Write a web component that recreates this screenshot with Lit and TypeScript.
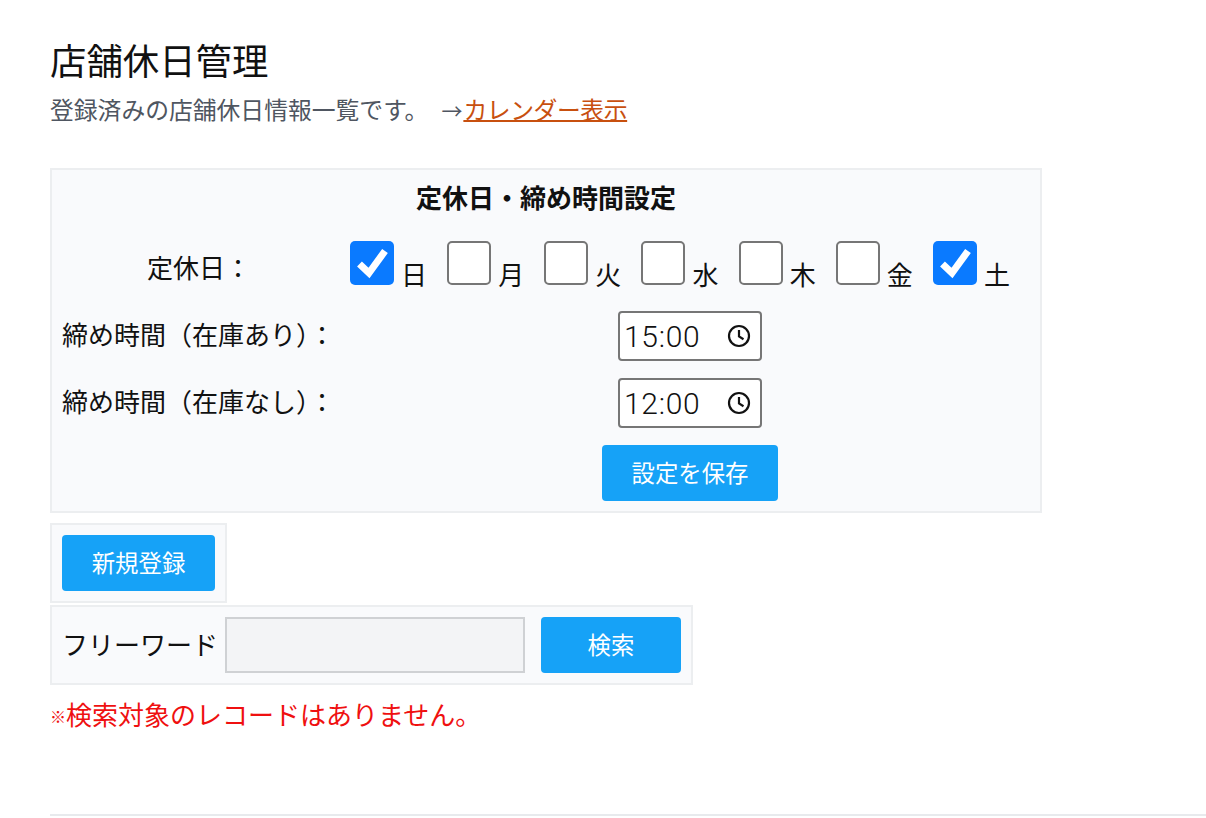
import { LitElement, html, css, svg } from "lit";
import { customElement } from "lit/decorators.js";

const DAYS: [string, boolean][] = [
  ["日", true], ["月", false], ["火", false], ["水", false], ["木", false], ["金", false], ["土", true],
];

const clock = html`<svg class="clock" viewBox="0 0 24 24" width="24" height="24" fill="none" stroke="#111" stroke-width="2.2">
  <circle cx="12" cy="12" r="10"></circle>
  ${svg`<path d="M12 6v6.500l4.500 2.700"></path>`}
</svg>`;

@customElement("app-root")
export class AppRoot extends LitElement {
  static styles = css`
    :host {
      display: block;
      box-sizing: border-box;
      height: 818px;
      overflow: hidden;
      padding: 43px 0 0 50px;
      background: #fff;
      color: #111;
      font-family: "Liberation Sans", "Noto Sans CJK JP", sans-serif;
      font-size: 26px;
    }
    h1 { margin: 0; font-size: 36.4px; font-weight: 400; line-height: 40px; height: 40px; color: #111; }
    .lead { margin: 7px 0 0; line-height: 42px; height: 40px; color: #4f5661; font-size: 23.8px; white-space: nowrap; }
    .lead a { color: #c8500f; text-decoration: underline; text-decoration-thickness: 2px; letter-spacing: -0.4px; }
    .arrow { display: inline-block; width: 22px; margin-left: 13px; font-size: 21px; line-height: 1; font-family: "Noto Sans CJK JP", sans-serif; }
    .panel { box-sizing: border-box; border: 2px solid #eceef0; background: #f9fafc; }
    .settings {
      width: 992px; height: 345px; margin-top: 38px;
      display: grid; grid-template-columns: 288px 1fr; align-content: start;
      padding: 0 10px;
    }
    .settings h2 {
      grid-column: 1 / 3; margin: 0; height: 57px; line-height: 59px;
      text-align: center; font-size: 26px; font-weight: 700; color: #111;
    }
    .row-label { height: 67px; line-height: 50px; white-space: nowrap; }
    .row-label.center { text-align: center; height: 84px; line-height: 84px; padding-right: 14px; }
    .days { display: flex; justify-content: space-between; height: 84px; padding: 14px 20px 0 0; box-sizing: border-box; }
    .day { display: flex; align-items: flex-end; gap: 7px; height: 44px; }
    .day span.t { position: relative; top: 5px; line-height: 28px; }
    .cb { width: 44px; height: 44px; box-sizing: border-box; border: 2px solid #767676; border-radius: 5px; background: #fff; display: block; }
    .cb.on { border: 0; background: #0a7aff; }
    .cb svg { display: block; }
    .time-cell { height: 67px; display: flex; justify-content: center; }
    .time {
      box-sizing: border-box; width: 144px; height: 50px; border: 2px solid #767676; border-radius: 4px;
      background: #fff; display: flex; align-items: center; justify-content: space-between; padding: 0 9px 0 4px;
      font-family: Roboto, sans-serif; font-weight: 300; font-size: 30px; letter-spacing: 0.7px; color: #111;
    }
    .clock { display: block; }
    .save-cell { grid-column: 2; display: flex; justify-content: center; }
    .btn {
      border: 0; border-radius: 4px; background: #16a2f7; color: #fff; height: 56px; box-sizing: border-box;
      font: inherit; font-size: 23.4px; display: flex; align-items: center; justify-content: center; padding: 0 0 3px;
    }
    .save { width: 176px; }
    .new { width: 177px; height: 80px; margin-top: 10px; padding: 10px; }
    .new .btn { width: 153px; }
    .search { width: 643px; height: 80px; margin-top: 2px; padding: 10px; display: flex; align-items: center; }
    .search label { width: 163px; flex: none; padding: 0 0 4px 0; white-space: nowrap; box-sizing: border-box; }
    .search input {
      box-sizing: border-box; width: 300px; height: 56px; border: 2px solid #cfd1d4; background: #f3f4f6;
      border-radius: 0; margin: 0 16px 0 0; padding: 0 8px; font: inherit; outline: none;
    }
    .search .btn { width: 140px; }
    .err { margin: 11px 0 0; color: #ef1010; line-height: 40px; height: 40px; white-space: nowrap; }
    .mark { display: inline-block; width: 16px; font-size: 16px; line-height: 1; font-weight: 900; vertical-align: 2px; }
    hr { border: 0; height: 2px; background: #e8eaed; margin: 78px 0 0; }
  `;

  render() {
    return html`
      <h1>店舗休日管理</h1>
      <p class="lead">登録済みの店舗休日情報一覧です。<span class="arrow">→</span><a href="#">カレンダー表示</a></p>
      <section class="panel settings">
        <h2>定休日・締め時間設定</h2>
        <div class="row-label center">定休日：</div>
        <div class="days">
          ${DAYS.map(([d, on]) => html`
            <div class="day">
              <span class="cb ${on ? "on" : ""}">
                ${on ? html`<svg viewBox="0 0 44 44" width="44" height="44"><path d="M9.500 23l9.500 9L35 10" fill="none" stroke="#fff" stroke-width="7"></path></svg>` : ""}
              </span>
              <span class="t">${d}</span>
            </div>`)}
        </div>
        <div class="row-label">締め時間（在庫あり）：</div>
        <div class="time-cell"><div class="time">15:00${clock}</div></div>
        <div class="row-label">締め時間（在庫なし）：</div>
        <div class="time-cell"><div class="time">12:00${clock}</div></div>
        <div class="save-cell"><button class="btn save">設定を保存</button></div>
      </section>
      <section class="panel new"><button class="btn">新規登録</button></section>
      <section class="panel search">
        <label>フリーワード</label>
        <input type="text" />
        <button class="btn">検索</button>
      </section>
      <p class="err"><span class="mark">※</span>検索対象のレコードはありません。</p>
      <hr />
    `;
  }
}
